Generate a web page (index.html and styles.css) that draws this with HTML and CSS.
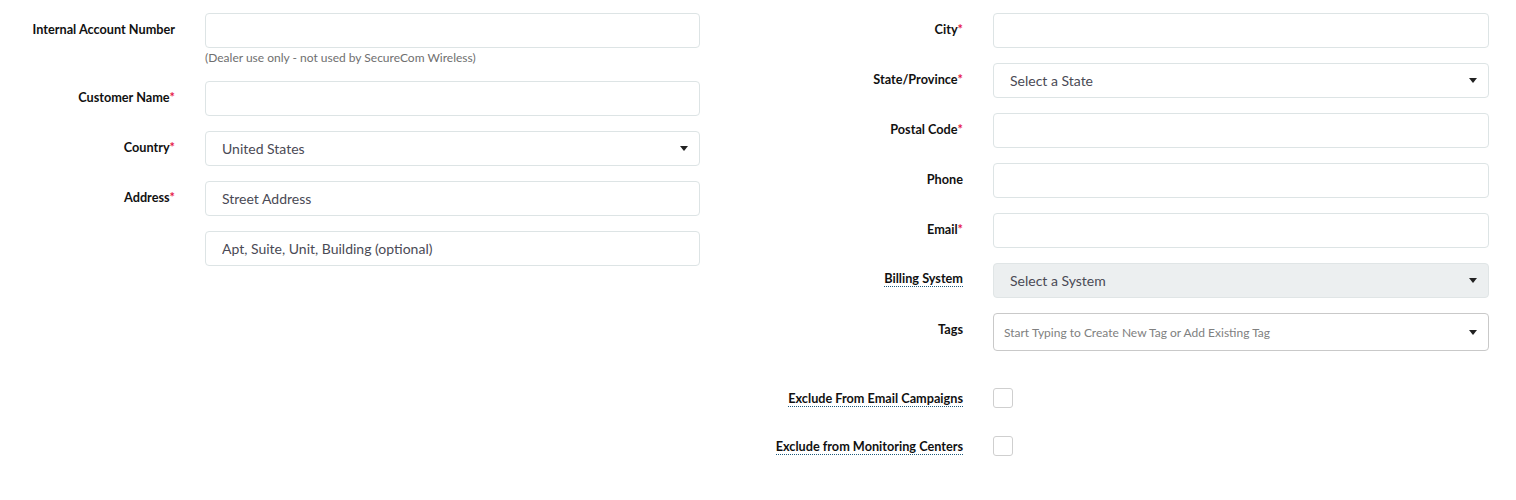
FILE: index.html
```html
<!DOCTYPE html>
<html lang="en">
<head>
<meta charset="utf-8">
<title>Customer Form</title>
<link rel="stylesheet" href="styles.css">
</head>
<body>
<div class="form">
  <div class="col">
    <div class="group">
      <label class="label">Internal Account Number</label>
      <div class="field">
        <input class="input" type="text">
        <div class="help">(Dealer use only - not used by SecureCom Wireless)</div>
      </div>
    </div>
    <div class="group">
      <label class="label">Customer Name<span class="req">*</span></label>
      <div class="field"><input class="input" type="text"></div>
    </div>
    <div class="group">
      <label class="label">Country<span class="req">*</span></label>
      <div class="field"><div class="select"><span>United States</span><i class="caret"></i></div></div>
    </div>
    <div class="group">
      <label class="label">Address<span class="req">*</span></label>
      <div class="field stack">
        <input class="input" type="text" placeholder="Street Address">
        <input class="input" type="text" placeholder="Apt, Suite, Unit, Building (optional)">
      </div>
    </div>
  </div>
  <div class="col right">
    <div class="group">
      <label class="label">City<span class="req">*</span></label>
      <div class="field"><input class="input" type="text"></div>
    </div>
    <div class="group">
      <label class="label">State/Province<span class="req">*</span></label>
      <div class="field"><div class="select"><span>Select a State</span><i class="caret"></i></div></div>
    </div>
    <div class="group">
      <label class="label">Postal Code<span class="req">*</span></label>
      <div class="field"><input class="input" type="text"></div>
    </div>
    <div class="group">
      <label class="label">Phone</label>
      <div class="field"><input class="input" type="text"></div>
    </div>
    <div class="group">
      <label class="label">Email<span class="req">*</span></label>
      <div class="field"><input class="input" type="text"></div>
    </div>
    <div class="group">
      <label class="label"><span class="tip">Billing System</span></label>
      <div class="field"><div class="select disabled"><span>Select a System</span><i class="caret"></i></div></div>
    </div>
    <div class="group">
      <label class="label">Tags</label>
      <div class="field"><div class="select tags"><span>Start Typing to Create New Tag or Add Existing Tag</span><i class="caret"></i></div></div>
    </div>
    <div class="check-group first">
      <label class="label"><span class="tip">Exclude From Email Campaigns</span></label>
      <div class="field"><span class="checkbox"></span></div>
    </div>
    <div class="check-group">
      <label class="label"><span class="tip">Exclude from Monitoring Centers</span></label>
      <div class="field"><span class="checkbox"></span></div>
    </div>
  </div>
</div>
</body>
</html>
```

FILE: styles.css
```css
* { box-sizing: border-box; }
html, body { margin: 0; padding: 0; background: #fff; }
body {
  font-family: Lato, "Open Sans", Arial, sans-serif;
  color: #111;
  width: 1516px;
}
.form {
  display: flex;
  gap: 88px;
  padding-top: 13px;
}
.col { width: 700px; }
.col.right { width: 701px; }
.group {
  display: grid;
  grid-template-columns: 175px 1fr;
  column-gap: 30px;
  margin-bottom: 15px;
}
.label {
  text-align: right;
  font-size: 12.7px;
  font-weight: 700;
  line-height: 18px;
  padding-top: 7px;
  color: #111;
  white-space: nowrap;
  display: flex;
  justify-content: flex-end;
  align-items: flex-start;
}
.req { color: #e5194a; }
.tip {
  border-bottom: 1px dotted #1f5a7a;
  line-height: 16px;
}
.field { min-width: 0; }
.stack { display: flex; flex-direction: column; gap: 15px; }
.input, .select {
  display: flex;
  align-items: center;
  width: 100%;
  height: 35px;
  border: 1px solid #dde4e5;
  border-radius: 4px;
  padding: 0 16px;
  font-family: Lato, "Open Sans", Arial, sans-serif;
  font-size: 14px;
  color: #4a4a55;
  background: #fff;
  outline: none;
}
.input::placeholder { color: #4a4a55; opacity: 1; }
.select { justify-content: space-between; padding-right: 11px; }
.select.disabled { background: #eceff0; border-color: #e0e5e6; }
.select.tags {
  height: 38px;
  border-color: #c9c9c9;
  padding-left: 10px;
  font-size: 12px;
  color: #808080;
}
.caret {
  display: block;
  width: 0; height: 0;
  border-left: 4px solid transparent;
  border-right: 4px solid transparent;
  border-top: 5px solid #222;
}
.help {
  margin-top: 2px;
  font-size: 12px;
  line-height: 16px;
  color: #6f6f6f;
}
.check-group {
  display: grid;
  grid-template-columns: 175px 1fr;
  column-gap: 30px;
  align-items: center;
  margin-top: 28px;
}
.check-group.first { margin-top: 37px; }
.check-group .label { padding-top: 0; line-height: 20px; align-items: center; }
.checkbox {
  display: block;
  width: 20px; height: 20px;
  border: 1px solid #cfcfcf;
  border-radius: 3px;
  background: #fff;
}
```
